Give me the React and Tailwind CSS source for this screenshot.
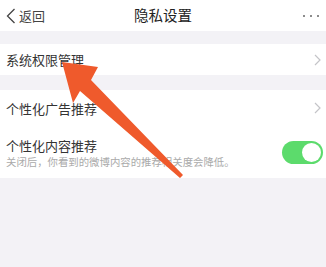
import React from "react";

const Chevron = () => (
  <svg width="7" height="12" viewBox="0 0 7 12" className="shrink-0">
    <path d="M1 1 L6 6 L1 11" fill="none" stroke="#c4c4c8" strokeWidth="1.2" />
  </svg>
);

export default function App() {
  return (
    <div
      className="relative w-[326px] h-[267px] overflow-hidden bg-[#f3f2f6] text-[#333]"
      style={{ fontFamily: '"Noto Sans CJK SC", "Noto Sans", sans-serif' }}
    >
      <div className="h-[31px] bg-white flex items-center justify-between px-[6px]">
        <div className="flex items-center gap-[3px] w-[80px]">
          <svg width="10" height="16" viewBox="0 0 10 16">
            <path d="M8.5 1 L1.5 8 L8.5 15" fill="none" stroke="#444" strokeWidth="1.3" />
          </svg>
          <span className="text-[13px] leading-none text-[#444]">返回</span>
        </div>
        <span className="text-[14.5px] leading-none text-[#222]">隐私设置</span>
        <div className="w-[80px] flex justify-end gap-[5px] pr-[1px]">
          <span className="w-[2px] h-[2px] rounded-full bg-[#666]" />
          <span className="w-[2px] h-[2px] rounded-full bg-[#666]" />
          <span className="w-[2px] h-[2px] rounded-full bg-[#666]" />
        </div>
      </div>
      <div className="h-[13px]" />
      <div className="h-[31px] bg-white flex items-center justify-between pl-[6px] pr-[5px]">
        <span className="text-[13px] leading-none">系统权限管理</span>
        <Chevron />
      </div>
      <div className="h-[15px]" />
      <div className="bg-white">
        <div className="h-[36px] flex items-center justify-between pl-[6px] pr-[5px]">
          <span className="text-[13px] leading-none">个性化广告推荐</span>
          <Chevron />
        </div>
        <div className="h-[52px] flex items-center justify-between pl-[6px] pr-[3px]">
          <div className="flex flex-col gap-[3px] pt-[2px]">
            <span className="text-[13px] leading-[15px]">个性化内容推荐</span>
            <span className="text-[10.4px] leading-[12px] text-[#aaa]">关闭后，你看到的微博内容的推荐相关度会降低。</span>
          </div>
          <div className="w-[41px] h-[23px] rounded-full bg-[#5cdb6c] relative mt-[1px]">
            <div className="absolute right-[2px] top-[2px] w-[19px] h-[19px] rounded-full bg-white" />
          </div>
        </div>
      </div>
      <svg
        className="absolute left-0 top-0 pointer-events-none"
        width="326"
        height="267"
        viewBox="0 0 326 267"
      >
        <polygon
          points="62,62 98,67 91,80 183,175 180,178 80,91 73,103"
          fill="#ef5a2c"
        />
      </svg>
    </div>
  );
}
